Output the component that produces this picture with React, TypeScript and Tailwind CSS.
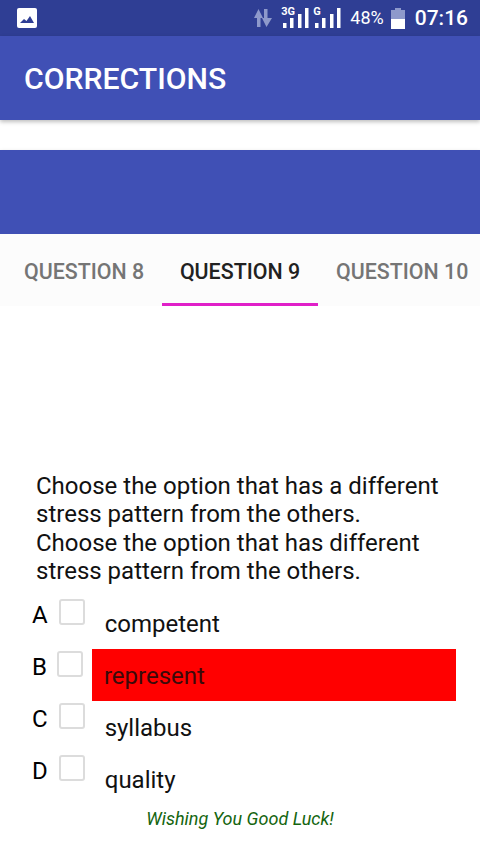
const options = [
  { letter: "A", text: "competent", wrong: false, box: "ml-[11px]" },
  { letter: "B", text: "represent", wrong: true, box: "ml-[10px]" },
  { letter: "C", text: "syllabus", wrong: false, box: "ml-[11px]" },
  { letter: "D", text: "quality", wrong: false, box: "ml-[11px]" },
];

function Signal({ label }: { label: string }) {
  return (
    <div className="relative h-[22px] w-[27px]">
      {/* network type sits over the short bars */}
      <span className="absolute top-[-1px] left-[-2px] text-[11px] leading-[11px] font-bold text-white">
        {label}
      </span>
      <svg width="27" height="22" viewBox="0 0 27 22" fill="white">
        <rect x="0" y="16" width="3.500" height="5" />
        <rect x="7" y="11" width="3.500" height="10" />
        <rect x="15" y="7" width="3.500" height="14" />
        <rect x="22" y="1" width="3.500" height="20" />
      </svg>
    </div>
  );
}

function StatusBar() {
  return (
    <div className="flex h-9 items-center bg-[#2f3e94] pr-3 pl-[17px] text-white">
      {/* gallery notification */}
      <svg width="20" height="20" viewBox="0 0 20 20">
        <rect width="20" height="20" rx="2" fill="white" />
        <path d="M3 15l4-4 2.500 2 3.500-5 4 7z" fill="#2f3e94" />
      </svg>

      {/* data arrows */}
      <svg className="ml-auto" width="18" height="18" viewBox="0 0 18 18" fill="#8e99cb">
        <path d="M4.500 0L0 9h3v9h3.500V9h2.500z" />
        <path d="M10 0h3.500v9H18l-5.500 9L8 9h2z" />
      </svg>

      <div className="ml-[11px] flex gap-[5px]">
        <Signal label="3G" />
        <Signal label="G" />
      </div>

      <span className="ml-2 text-[18px] leading-none">48%</span>

      {/* battery */}
      <svg className="ml-[7px]" width="14" height="21" viewBox="0 0 14 21">
        <path d="M4 0h6v2h4v19H0V2h4z" fill="#8e99cb" />
        <rect y="11" width="14" height="10" fill="white" />
      </svg>

      <span className="ml-[10px] text-[21px] leading-none font-medium">07:16</span>
    </div>
  );
}

export default function App() {
  return (
    <div className="flex h-[854px] w-[480px] flex-col overflow-hidden bg-white font-['Roboto',sans-serif] text-black">
      <StatusBar />

      <header className="flex h-[84px] items-center bg-[#4050b5] px-6 pt-[1px] shadow-[0_2px_4px_rgba(0,0,0,0.25)]">
        <h1 className="text-[30.200px] font-medium text-white">CORRECTIONS</h1>
      </header>

      <div className="mt-[30px] h-[84px] bg-[#4050b5] shadow-[0_2px_4px_rgba(0,0,0,0.25)]" />

      {/* tabs */}
      <div className="flex h-[72px] justify-center bg-[#fcfcfc] text-[21.400px] font-medium">
        <div className="flex w-[162px] items-center pt-1 pl-6 whitespace-nowrap text-[#757575]">QUESTION 8</div>
        <div className="flex w-[156px] items-center justify-center border-b-[3px] border-[#e020c8] pt-[7px] whitespace-nowrap text-[#212121]">
          QUESTION 9
        </div>
        <div className="flex w-[162px] items-center pt-1 pl-[18px] whitespace-nowrap text-[#757575]">QUESTION 10</div>
      </div>

      {/* question */}
      <div className="px-9 pt-[165.600px] text-[24px] leading-[28.500px] text-[#111]">
        <p>Choose the option that has a different stress pattern from the others.</p>
        <p>Choose the option that has different stress pattern from the others.</p>
      </div>

      <ul className="mt-[13.400px] flex flex-col pr-6 pl-8">
        {options.map((o) => (
          <li key={o.letter} className="flex h-[52px] items-start text-[24px]">
            <span className="mt-[2px] leading-7">{o.letter}</span>
            <span className={`${o.box} h-[26px] w-[26px] rounded-[3px] border-2 border-[#dcdcdc] bg-white`} />
            <span
              className={
                o.wrong
                  ? "mt-[-2px] ml-[9px] h-[52px] flex-1 bg-[#ff0000] pt-[13px] pl-3 leading-7 text-[#3a0a0a]"
                  : "mt-[-2px] ml-2 h-[52px] flex-1 pt-[13px] pl-[12px] leading-7 text-[#111]"
              }
            >
              {o.text}
            </span>
          </li>
        ))}
      </ul>

      <p className="mt-[-2px] text-center text-[18px] text-[#14650f] italic">
        Wishing You Good Luck!
      </p>
    </div>
  );
}
